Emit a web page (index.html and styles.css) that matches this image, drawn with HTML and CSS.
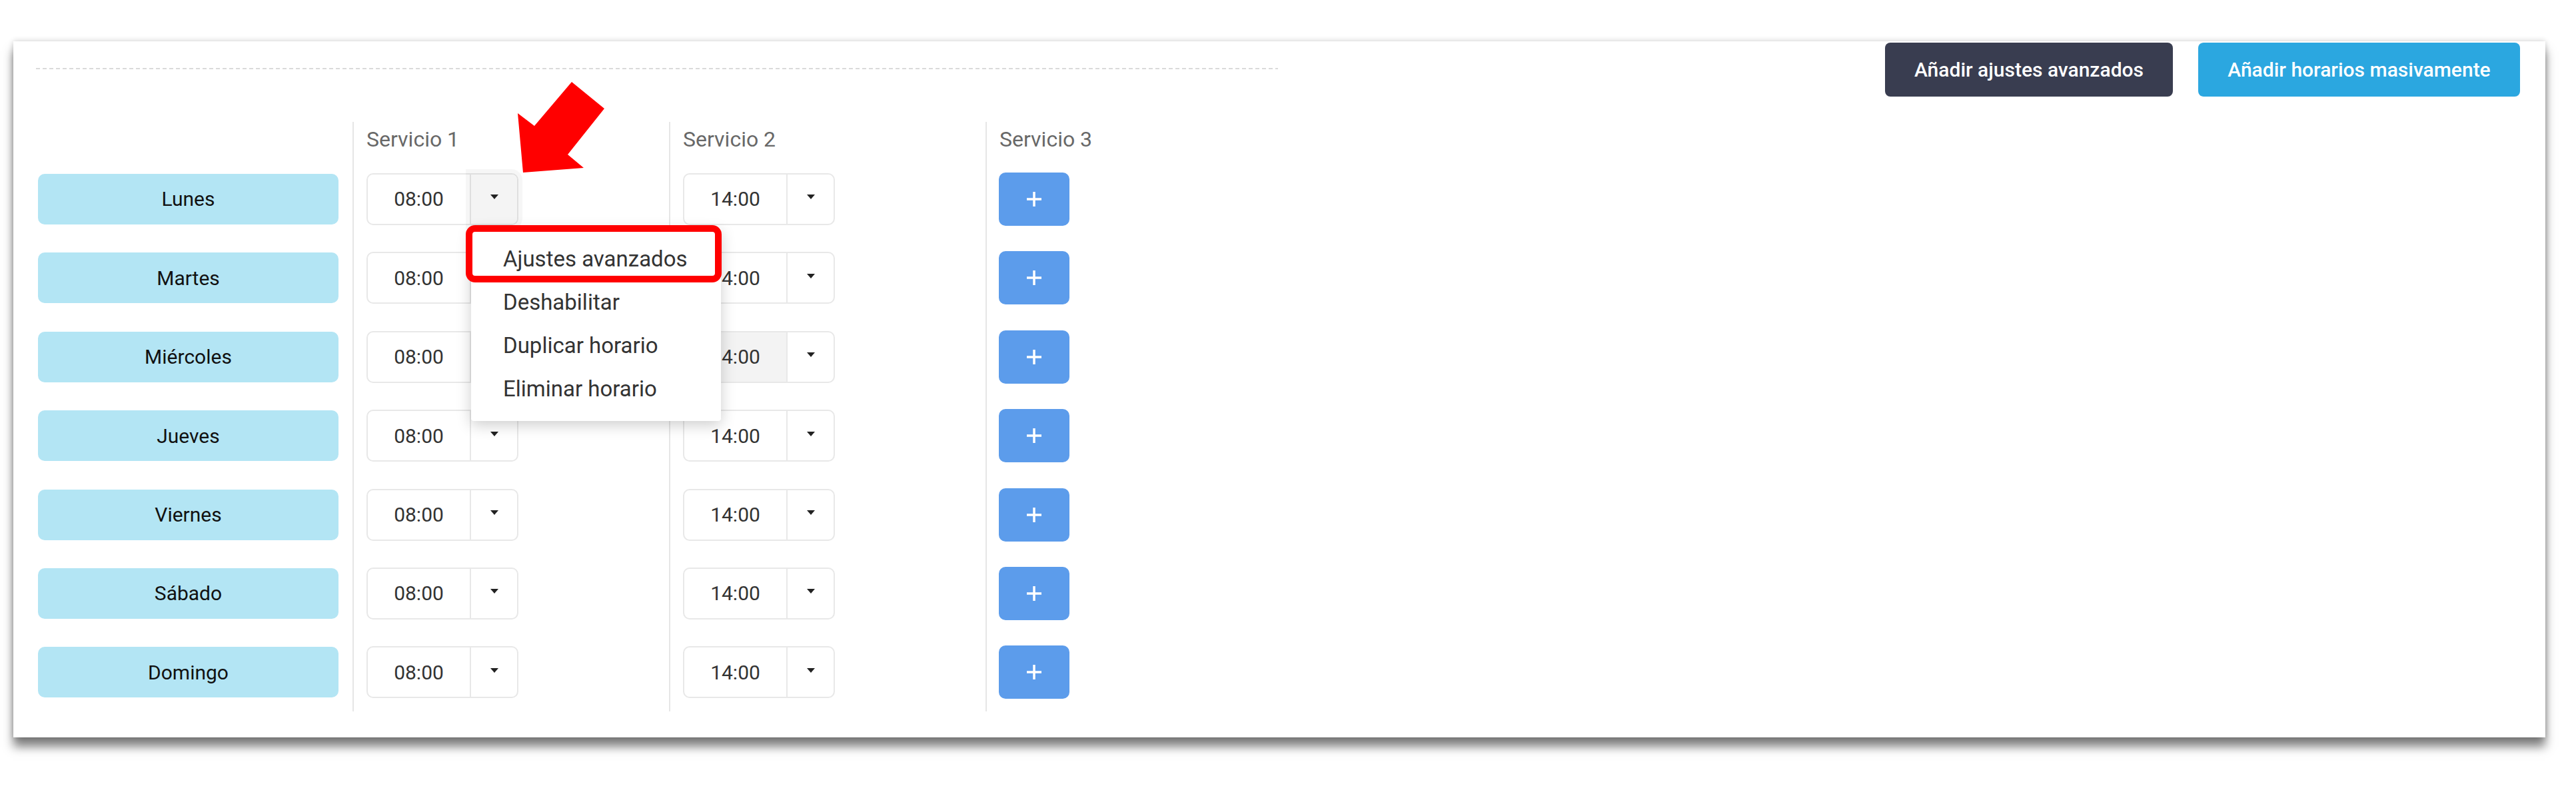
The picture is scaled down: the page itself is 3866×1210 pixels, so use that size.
FILE: index.html
```html
<!DOCTYPE html>
<html lang="es">
<head>
    <meta charset="UTF-8">
    <meta name="viewport" content="width=device-width, initial-scale=1.0">
    <title>Horarios</title>
    <link rel="stylesheet" href="styles.css">
</head>
<body>
    <div class="page">
        <section class="card">

            <div class="toolbar">
                <div class="toolbar-rule"></div>
                <div class="toolbar-actions">
                    <button class="btn btn-dark">Añadir ajustes avanzados</button>
                    <button class="btn btn-blue">Añadir horarios masivamente</button>
                </div>
            </div>

            <div class="schedule">
                <!-- días -->
                <div class="col col-days">
                    <div class="col-head"></div>
                    <div class="slot"><div class="day">Lunes</div></div>
                    <div class="slot"><div class="day">Martes</div></div>
                    <div class="slot"><div class="day">Miércoles</div></div>
                    <div class="slot"><div class="day">Jueves</div></div>
                    <div class="slot"><div class="day">Viernes</div></div>
                    <div class="slot"><div class="day">Sábado</div></div>
                    <div class="slot"><div class="day">Domingo</div></div>
                </div>

                <!-- servicio 1 -->
                <div class="col col-service">
                    <div class="col-head">Servicio 1</div>
                    <div class="slot">
                        <div class="time-group">
                            <div class="time-value">08:00</div>
                            <div class="time-toggle is-active"><span class="caret"></span></div>

                            <svg class="pointer-arrow" width="145" height="150" viewBox="0 0 145 150">
                                <polygon points="13,144 5,55 30,74 86,8 135,48 80,117 104,137" fill="#ff0000"/>
                            </svg>

                            <ul class="dropdown">
                                <li class="dropdown-item">Ajustes avanzados</li>
                                <li class="dropdown-item">Deshabilitar</li>
                                <li class="dropdown-item">Duplicar horario</li>
                                <li class="dropdown-item">Eliminar horario</li>
                                <li class="highlight-box"></li>
                            </ul>
                        </div>
                    </div>
                    <div class="slot"><div class="time-group"><div class="time-value">08:00</div><div class="time-toggle"><span class="caret"></span></div></div></div>
                    <div class="slot"><div class="time-group"><div class="time-value">08:00</div><div class="time-toggle"><span class="caret"></span></div></div></div>
                    <div class="slot"><div class="time-group"><div class="time-value">08:00</div><div class="time-toggle"><span class="caret"></span></div></div></div>
                    <div class="slot"><div class="time-group"><div class="time-value">08:00</div><div class="time-toggle"><span class="caret"></span></div></div></div>
                    <div class="slot"><div class="time-group"><div class="time-value">08:00</div><div class="time-toggle"><span class="caret"></span></div></div></div>
                    <div class="slot"><div class="time-group"><div class="time-value">08:00</div><div class="time-toggle"><span class="caret"></span></div></div></div>
                </div>

                <!-- servicio 2 -->
                <div class="col col-service">
                    <div class="col-head">Servicio 2</div>
                    <div class="slot"><div class="time-group"><div class="time-value">14:00</div><div class="time-toggle"><span class="caret"></span></div></div></div>
                    <div class="slot"><div class="time-group"><div class="time-value">14:00</div><div class="time-toggle"><span class="caret"></span></div></div></div>
                    <div class="slot"><div class="time-group"><div class="time-value is-hover">14:00</div><div class="time-toggle"><span class="caret"></span></div></div></div>
                    <div class="slot"><div class="time-group"><div class="time-value">14:00</div><div class="time-toggle"><span class="caret"></span></div></div></div>
                    <div class="slot"><div class="time-group"><div class="time-value">14:00</div><div class="time-toggle"><span class="caret"></span></div></div></div>
                    <div class="slot"><div class="time-group"><div class="time-value">14:00</div><div class="time-toggle"><span class="caret"></span></div></div></div>
                    <div class="slot"><div class="time-group"><div class="time-value">14:00</div><div class="time-toggle"><span class="caret"></span></div></div></div>
                </div>

                <!-- servicio 3 -->
                <div class="col col-service">
                    <div class="col-head">Servicio 3</div>
                    <div class="slot"><button class="btn-add"><svg width="26" height="26" viewBox="0 0 26 26"><path d="M13 2v22M2 13h22" stroke="#fff" stroke-width="3.5"/></svg></button></div>
                    <div class="slot"><button class="btn-add"><svg width="26" height="26" viewBox="0 0 26 26"><path d="M13 2v22M2 13h22" stroke="#fff" stroke-width="3.5"/></svg></button></div>
                    <div class="slot"><button class="btn-add"><svg width="26" height="26" viewBox="0 0 26 26"><path d="M13 2v22M2 13h22" stroke="#fff" stroke-width="3.5"/></svg></button></div>
                    <div class="slot"><button class="btn-add"><svg width="26" height="26" viewBox="0 0 26 26"><path d="M13 2v22M2 13h22" stroke="#fff" stroke-width="3.5"/></svg></button></div>
                    <div class="slot"><button class="btn-add"><svg width="26" height="26" viewBox="0 0 26 26"><path d="M13 2v22M2 13h22" stroke="#fff" stroke-width="3.5"/></svg></button></div>
                    <div class="slot"><button class="btn-add"><svg width="26" height="26" viewBox="0 0 26 26"><path d="M13 2v22M2 13h22" stroke="#fff" stroke-width="3.5"/></svg></button></div>
                    <div class="slot"><button class="btn-add"><svg width="26" height="26" viewBox="0 0 26 26"><path d="M13 2v22M2 13h22" stroke="#fff" stroke-width="3.5"/></svg></button></div>
                </div>
            </div>

        </section>
    </div>
</body>
</html>
```

FILE: styles.css
```css
html, body {
    height: 100%;
}
body {
    margin: 0;
    background-color: #ffffff;
    font-family: 'Roboto', 'Liberation Sans', sans-serif;
    color: #333333;
    overflow: hidden;
}
.page {
    min-height: 100%;
    box-sizing: border-box;
    padding: 62px 46px 0 20px;
}
.card {
    background-color: #ffffff;
    padding: 2px 38px 39px 37px;
    box-shadow: 0 14px 14px rgba(0, 0, 0, 0.5), 0 0 8px rgba(0, 0, 0, 0.2);
}

/* barra superior */
.toolbar {
    display: flex;
    justify-content: space-between;
    align-items: flex-start;
}
.toolbar-rule {
    width: 1864px;
    height: 2px;
    margin: 38px 0 0 -3px;
    background: repeating-linear-gradient(90deg, #dadada 0 6px, transparent 6px 10px);
}
.toolbar-actions {
    display: flex;
    gap: 38px;
}
.btn {
    height: 81px;
    border: none;
    border-radius: 8px;
    color: #ffffff;
    font-family: inherit;
    font-size: 30px;
    font-weight: 500;
    padding: 0;
    text-align: center;
}
.btn-dark {
    width: 432px;
    background-color: #393d50;
}
.btn-blue {
    width: 483px;
    background-color: #2ba7e0;
}

/* tabla de horarios */
.schedule {
    display: grid;
    grid-template-columns: 472px 475px 475px 475px;
    margin-top: 38px;
}
.col {
    display: flex;
    flex-direction: column;
    gap: 40.4px;
    padding-bottom: 20px;
}
.col-service {
    border-left: 2px solid #e6e6e6;
    padding-left: 19px;
}
.col-head {
    height: 36.6px;
    padding-top: 6px;
    line-height: 40px;
    font-size: 32px;
    color: #686868;
    box-sizing: border-box;
    white-space: nowrap;
}
.slot {
    height: 78px;
    display: flex;
    align-items: center;
}
.day {
    width: 451px;
    height: 76px;
    border-radius: 10px;
    background-color: #b3e5f4;
    color: #111111;
    font-size: 30px;
    display: flex;
    align-items: center;
    justify-content: center;
}

/* selector de hora */
.time-group {
    position: relative;
    width: 228px;
    height: 78px;
    border: 2px solid #e8e8e8;
    border-radius: 10px;
    box-sizing: border-box;
    display: flex;
}
.time-value {
    width: 153px;
    border-right: 2px solid #e8e8e8;
    border-radius: 8px 0 0 8px;
    font-size: 30px;
    color: #333333;
    display: flex;
    align-items: center;
    justify-content: center;
}
.time-value.is-hover {
    background-color: #f3f3f3;
}
.time-toggle {
    flex: 1;
    display: flex;
    align-items: center;
    justify-content: center;
    border-radius: 0 8px 8px 0;
}
.time-toggle.is-active {
    background-color: #f4f4f4;
    box-shadow: 0 0 0 8px rgba(0, 0, 0, 0.035);
}
.caret {
    width: 0;
    height: 0;
    margin-bottom: 6px;
    border-left: 6px solid transparent;
    border-right: 6px solid transparent;
    border-top: 7px solid #222222;
}

.btn-add {
    width: 106px;
    height: 80px;
    margin-left: -1px;
    border: none;
    border-radius: 10px;
    background-color: #5c9ceb;
    display: flex;
    align-items: center;
    justify-content: center;
    padding: 0;
}

/* menu desplegable */
.dropdown {
    position: absolute;
    top: calc(100% + 6px);
    left: 155px;
    z-index: 10;
    width: 375px;
    margin: 0;
    padding: 14px 0 16px;
    list-style: none;
    background-color: #ffffff;
    border-radius: 4px;
    box-shadow: 0 6px 22px rgba(0, 0, 0, 0.2);
}
.dropdown-item {
    padding: 0 48px;
    line-height: 65px;
    font-size: 33px;
    color: #333333;
    white-space: nowrap;
}
.highlight-box {
    position: absolute;
    left: -8px;
    top: -4px;
    width: 384px;
    height: 86px;
    border: 10px solid #ff0000;
    border-radius: 14px;
    box-sizing: border-box;
}
.pointer-arrow {
    position: absolute;
    left: 220px;
    top: -147px;
    z-index: 11;
}
```
